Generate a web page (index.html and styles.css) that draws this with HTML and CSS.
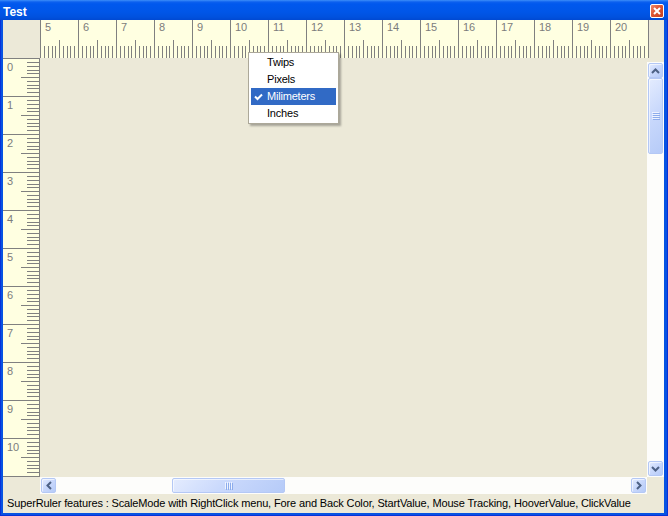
FILE: index.html
```html
<!DOCTYPE html>
<html>
<head>
<meta charset="utf-8">
<link rel="stylesheet" href="styles.css">
</head>
<body>
<div class="window">
  <div class="titlebar">
    <span class="title">Test</span>
    <span class="close"><svg width="12" height="12" viewBox="0 0 12 12"><path d="M3 3 L9 9 M9 3 L3 9" class="xmark"/></svg></span>
  </div>
  <div class="client">
    <div class="toprow">
      <div class="corner"></div>
      <svg class="hruler" width="609" height="38" viewBox="0 0 609 38">
        <defs>
          <pattern id="hp" x="0" y="0" width="38" height="38" patternUnits="userSpaceOnUse">
            <rect class="tk" x="0" y="0" width="1" height="38"/>
            <rect class="tk" x="4" y="26" width="1" height="12"/>
            <rect class="tk" x="8" y="26" width="1" height="12"/>
            <rect class="tk" x="12" y="26" width="1" height="12"/>
            <rect class="tk" x="15" y="26" width="1" height="12"/>
            <rect class="tk" x="19" y="20" width="1" height="18"/>
            <rect class="tk" x="23" y="26" width="1" height="12"/>
            <rect class="tk" x="27" y="26" width="1" height="12"/>
            <rect class="tk" x="30" y="26" width="1" height="12"/>
            <rect class="tk" x="34" y="26" width="1" height="12"/>
          </pattern>
        </defs>
        <rect class="rbg" width="609" height="38"/>
        <rect width="609" height="38" fill="url(#hp)"/>
        <g class="lbl">
          <text x="5" y="11">5</text><text x="43" y="11">6</text><text x="81" y="11">7</text><text x="119" y="11">8</text>
          <text x="157" y="11">9</text><text x="195" y="11">10</text><text x="233" y="11">11</text><text x="271" y="11">12</text>
          <text x="309" y="11">13</text><text x="347" y="11">14</text><text x="385" y="11">15</text><text x="423" y="11">16</text>
          <text x="461" y="11">17</text><text x="499" y="11">18</text><text x="537" y="11">19</text><text x="575" y="11">20</text>
        </g>
      </svg>
    </div>
    <div class="midrow">
      <svg class="vruler" width="37" height="419" viewBox="0 0 37 419">
        <defs>
          <pattern id="vp" x="0" y="0" width="37" height="38" patternUnits="userSpaceOnUse">
            <rect class="tk" x="0" y="0" width="37" height="1"/>
            <rect class="tk" x="24" y="4" width="12" height="1"/>
            <rect class="tk" x="24" y="8" width="12" height="1"/>
            <rect class="tk" x="24" y="12" width="12" height="1"/>
            <rect class="tk" x="24" y="15" width="12" height="1"/>
            <rect class="tk" x="18" y="19" width="18" height="1"/>
            <rect class="tk" x="24" y="23" width="12" height="1"/>
            <rect class="tk" x="24" y="27" width="12" height="1"/>
            <rect class="tk" x="24" y="30" width="12" height="1"/>
            <rect class="tk" x="24" y="34" width="12" height="1"/>
          </pattern>
        </defs>
        <rect class="rbg" width="37" height="419"/>
        <rect width="37" height="419" fill="url(#vp)"/>
        <rect class="tk" x="36" y="0" width="1" height="419"/>
        <g class="lbl">
          <text x="4" y="13">0</text><text x="4" y="51">1</text><text x="4" y="89">2</text><text x="4" y="127">3</text>
          <text x="4" y="165">4</text><text x="4" y="203">5</text><text x="4" y="241">6</text><text x="4" y="279">7</text>
          <text x="4" y="317">8</text><text x="4" y="355">9</text><text x="4" y="393">10</text>
        </g>
      </svg>
      <div class="canvas"></div>
      <div class="vscroll">
        <div class="sb"><div class="face"><svg width="9" height="6" viewBox="0 0 9 6"><polyline class="arrow" points="1,5 4.5,1.5 8,5"/></svg></div></div>
        <div class="face vthumb"><svg width="8" height="8" viewBox="0 0 8 8"><path class="grip-l" d="M0 0.5H7M0 2.5H7M0 4.5H7M0 6.5H7"/><path class="grip-d" d="M1 1.5H8M1 3.5H8M1 5.5H8M1 7.5H8"/></svg></div>
        <div class="spacer"></div>
        <div class="sb"><div class="face"><svg width="9" height="6" viewBox="0 0 9 6"><polyline class="arrow" points="1,1 4.5,4.5 8,1"/></svg></div></div>
      </div>
    </div>
    <div class="hrow">
      <div class="hscroll">
        <div class="sb"><div class="face"><svg width="6" height="9" viewBox="0 0 6 9"><polyline class="arrow" points="5,1 1.5,4.5 5,8"/></svg></div></div>
        <div class="face hthumb"><svg width="8" height="8" viewBox="0 0 8 8"><path class="grip-l" d="M0.5 0V7M2.5 0V7M4.5 0V7M6.5 0V7"/><path class="grip-d" d="M1.5 1V8M3.5 1V8M5.5 1V8M7.5 1V8"/></svg></div>
        <div class="spacer"></div>
        <div class="sb"><div class="face"><svg width="6" height="9" viewBox="0 0 6 9"><polyline class="arrow" points="1,1 4.5,4.5 1,8"/></svg></div></div>
      </div>
    </div>
    <div class="status">SuperRuler features : ScaleMode with RightClick menu, Fore and Back Color, StartValue, Mouse Tracking, HooverValue, ClickValue</div>
  </div>
  <div class="menu">
    <div class="item">Twips</div>
    <div class="item">Pixels</div>
    <div class="item active"><svg class="check" width="9" height="8" viewBox="0 0 9 8"><polyline points="1,3.5 3.5,6 8,1.5"/></svg>Milimeters</div>
    <div class="item">Inches</div>
  </div>
</div>
</body>
</html>
```

FILE: styles.css
```css
* { box-sizing: border-box; }
html, body { margin: 0; padding: 0; }
body {
  width: 668px;
  height: 516px;
  overflow: hidden;
  font-family: "Liberation Sans", Arial, sans-serif;
  font-size: 11px;
  background: #0553E3;
}
.window {
  position: relative;
  width: 668px;
  height: 516px;
  display: flex;
  flex-direction: column;
  background: #0753E2;
  box-shadow: inset 1px 0 #0831D9, inset -1px 0 #0831D9, inset 0 -1px #0831D9;
}
.titlebar {
  height: 20px;
  flex: none;
  display: flex;
  justify-content: space-between;
  align-items: flex-start;
  padding: 0 4px 0 3px;
  background: linear-gradient(to bottom, #3d8ef9 0px, #0c60ef 2px, #0058ee 4px, #0056e8 12px, #0051de 17px, #0049d2 20px);
}
.title {
  color: #fff;
  font-weight: bold;
  font-size: 12px;
  line-height: 16px;
  margin-top: 4px;
}
.close {
  width: 14px;
  height: 14px;
  margin-top: 4px;
  border: 1px solid #fff;
  border-radius: 2px;
  background: linear-gradient(135deg, #ee8a6d 0%, #dd5533 45%, #c4401e 100%);
  display: flex;
  align-items: center;
  justify-content: center;
}
.xmark { stroke: #fff; stroke-width: 2; fill: none; }
.client {
  flex: 1;
  margin: 0 4px 3px 3px;
  background: #ECE9D8;
  display: flex;
  flex-direction: column;
}
.toprow { display: flex; height: 38px; flex: none; }
.corner { width: 37px; flex: none; }
.hruler, .vruler { display: block; flex: none; }
.rbg { fill: #FFFFE1; }
.tk { fill: #808080; }
.lbl text { fill: #7c7c7c; font-family: "Liberation Sans", Arial, sans-serif; font-size: 11px; }
.midrow { display: flex; height: 419px; flex: none; }
.canvas { width: 607px; flex: none; }
.vscroll {
  width: 17px;
  height: 415px;
  margin-top: 4px;
  flex: none;
  background: #fdfdfb;
  display: flex;
  flex-direction: column;
}
.spacer { flex: 1; }
.sb { width: 17px; height: 17px; padding: 1px; flex: none; }
.face {
  border: 1px solid #b4c8f5;
  border-radius: 2px;
  background: linear-gradient(135deg, #e4ecfe 0%, #cad9fc 45%, #b6cbf8 100%);
  box-shadow: inset 1px 1px 0 rgba(255,255,255,0.6);
  display: flex;
  align-items: center;
  justify-content: center;
}
.sb .face { width: 100%; height: 100%; }
.arrow { fill: none; stroke: #4d6185; stroke-width: 2; }
.vthumb { margin: -1px 1px 0 1px; height: 76px; flex: none; }
.hrow { display: flex; height: 17px; flex: none; padding-left: 37px; }
.hscroll { width: 607px; display: flex; background: #fdfdfb; }
.hthumb { margin: 1px 0 1px 115px; width: 113px; flex: none; }
.grip-l { stroke: #eef3ff; stroke-width: 1; }
.grip-d { stroke: #8cacec; stroke-width: 1; }
.status {
  height: 19px;
  line-height: 19px;
  padding-left: 4px;
  color: #000;
  white-space: nowrap;
  letter-spacing: -0.14px;
  flex: none;
}
.menu {
  position: absolute;
  left: 248px;
  top: 52px;
  width: 91px;
  padding: 1px 2px;
  background: #fff;
  border: 1px solid #aca899;
  box-shadow: 2px 2px 2px rgba(0,0,0,0.3);
}
.item {
  position: relative;
  height: 17px;
  line-height: 17px;
  padding-left: 16px;
  color: #000;
  letter-spacing: -0.2px;
}
.item.active { background: #316ac5; color: #fff; }
.check { position: absolute; left: 3px; top: 5px; }
.check polyline { fill: none; stroke: #fff; stroke-width: 2; }
```
